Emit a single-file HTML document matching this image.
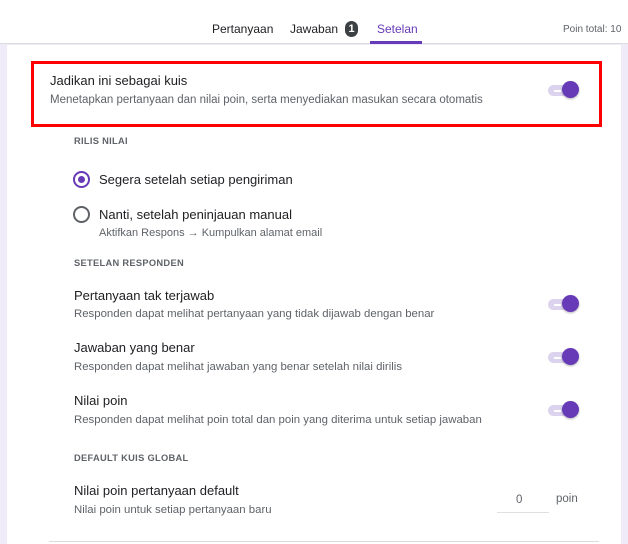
<!DOCTYPE html>
<html><head><meta charset="utf-8"><style>
*{margin:0;padding:0;box-sizing:border-box}
body{width:628px;height:544px;overflow:hidden;background:#f0ebf8;font-family:"Liberation Sans",Roboto,sans-serif;position:relative;color:#202124}
.hdr{position:absolute;left:0;top:0;width:628px;height:44px;background:#fff;border-bottom:1px solid #dadce0}
.card{position:absolute;left:7px;top:45px;width:614px;height:499px;background:#fff}
.t{position:absolute;white-space:nowrap}
.tab{font-size:12px;top:22px}
.red{position:absolute;left:31px;top:61px;width:571px;height:66px;border:3px solid #f00}
.h1{font-size:13px;color:#202124}
.sub{font-size:11.5px;color:#5f6368}
.sec{font-size:9.3px;font-weight:bold;color:#5f6368;letter-spacing:.3px}
.tog{position:absolute;width:32px;height:12px}
.tog .tr{position:absolute;left:0;top:1px;width:30px;height:11px;border-radius:6px;background:#dcd3ee}
.tog .kn{position:absolute;left:14px;top:-3px;width:17px;height:17px;border-radius:50%;background:#673ab7;box-shadow:0 1px 2px rgba(0,0,0,.3)}
.tog .ln{position:absolute;left:6px;top:6px;width:7px;height:1.5px;background:#fff}
</style></head><body>
<div class="hdr">
<div class="t tab" style="left:212px">Pertanyaan</div>
<div class="t tab" style="left:290px">Jawaban</div>
<div class="t" style="left:345px;top:21px;width:13px;height:16px;border-radius:7px;background:#3c4043;color:#fff;font-size:11px;font-weight:bold;text-align:center;line-height:16px">1</div>
<div class="t tab" style="left:377px;color:#673ab7">Setelan</div>
<div class="t" style="left:563px;top:24px;font-size:10px;color:#5f6368">Poin total: 10</div>
</div>
<div class="card"></div>
<div class="t" style="left:370px;top:41px;width:52px;height:3px;background:#673ab7"></div>
<div class="red"></div>
<div class="t h1" style="left:50px;top:73px">Jadikan ini sebagai kuis</div>
<div class="t sub" style="left:50px;top:94px">Menetapkan pertanyaan dan nilai poin, serta menyediakan masukan secara otomatis</div>
<div class="tog" style="left:548px;top:84px"><div class="tr"></div><div class="ln"></div><div class="kn"></div></div>

<div class="t sec" style="left:74px;top:136px">RILIS NILAI</div>
<div class="t" style="left:73px;top:171px;width:17px;height:17px;border:2px solid #673ab7;border-radius:50%"></div>
<div class="t" style="left:78px;top:176px;width:7px;height:7px;background:#673ab7;border-radius:50%"></div>
<div class="t h1" style="left:99px;top:172px">Segera setelah setiap pengiriman</div>
<div class="t" style="left:73px;top:206px;width:17px;height:17px;border:2px solid #5f6368;border-radius:50%"></div>
<div class="t h1" style="left:99px;top:207px">Nanti, setelah peninjauan manual</div>
<div class="t sub" style="left:99px;top:227px;font-size:11px">Aktifkan Respons → Kumpulkan alamat email</div>

<div class="t sec" style="left:74px;top:258px">SETELAN RESPONDEN</div>
<div class="t h1" style="left:74px;top:288px">Pertanyaan tak terjawab</div>
<div class="t sub" style="left:74px;top:308px;font-size:11.4px">Responden dapat melihat pertanyaan yang tidak dijawab dengan benar</div>
<div class="tog" style="left:548px;top:298px"><div class="tr"></div><div class="ln"></div><div class="kn"></div></div>
<div class="t h1" style="left:74px;top:340px">Jawaban yang benar</div>
<div class="t sub" style="left:74px;top:361px;font-size:11.4px">Responden dapat melihat jawaban yang benar setelah nilai dirilis</div>
<div class="tog" style="left:548px;top:351px"><div class="tr"></div><div class="ln"></div><div class="kn"></div></div>
<div class="t h1" style="left:74px;top:393px">Nilai poin</div>
<div class="t sub" style="left:74px;top:414px;font-size:11.4px">Responden dapat melihat poin total dan poin yang diterima untuk setiap jawaban</div>
<div class="tog" style="left:548px;top:404px"><div class="tr"></div><div class="ln"></div><div class="kn"></div></div>

<div class="t sec" style="left:74px;top:453px">DEFAULT KUIS GLOBAL</div>
<div class="t h1" style="left:74px;top:483px">Nilai poin pertanyaan default</div>
<div class="t sub" style="left:74px;top:504px;font-size:11.4px">Nilai poin untuk setiap pertanyaan baru</div>
<div class="t" style="left:516px;top:494px;font-size:11.5px;color:#5f6368">0</div>
<div class="t" style="left:497px;top:512px;width:52px;height:1px;background:#e0e0e0"></div>
<div class="t" style="left:556px;top:493px;font-size:11.5px;color:#5f6368">poin</div>
<div class="t" style="left:49px;top:541px;width:550px;height:1px;background:#dadce0"></div>
</body></html>
